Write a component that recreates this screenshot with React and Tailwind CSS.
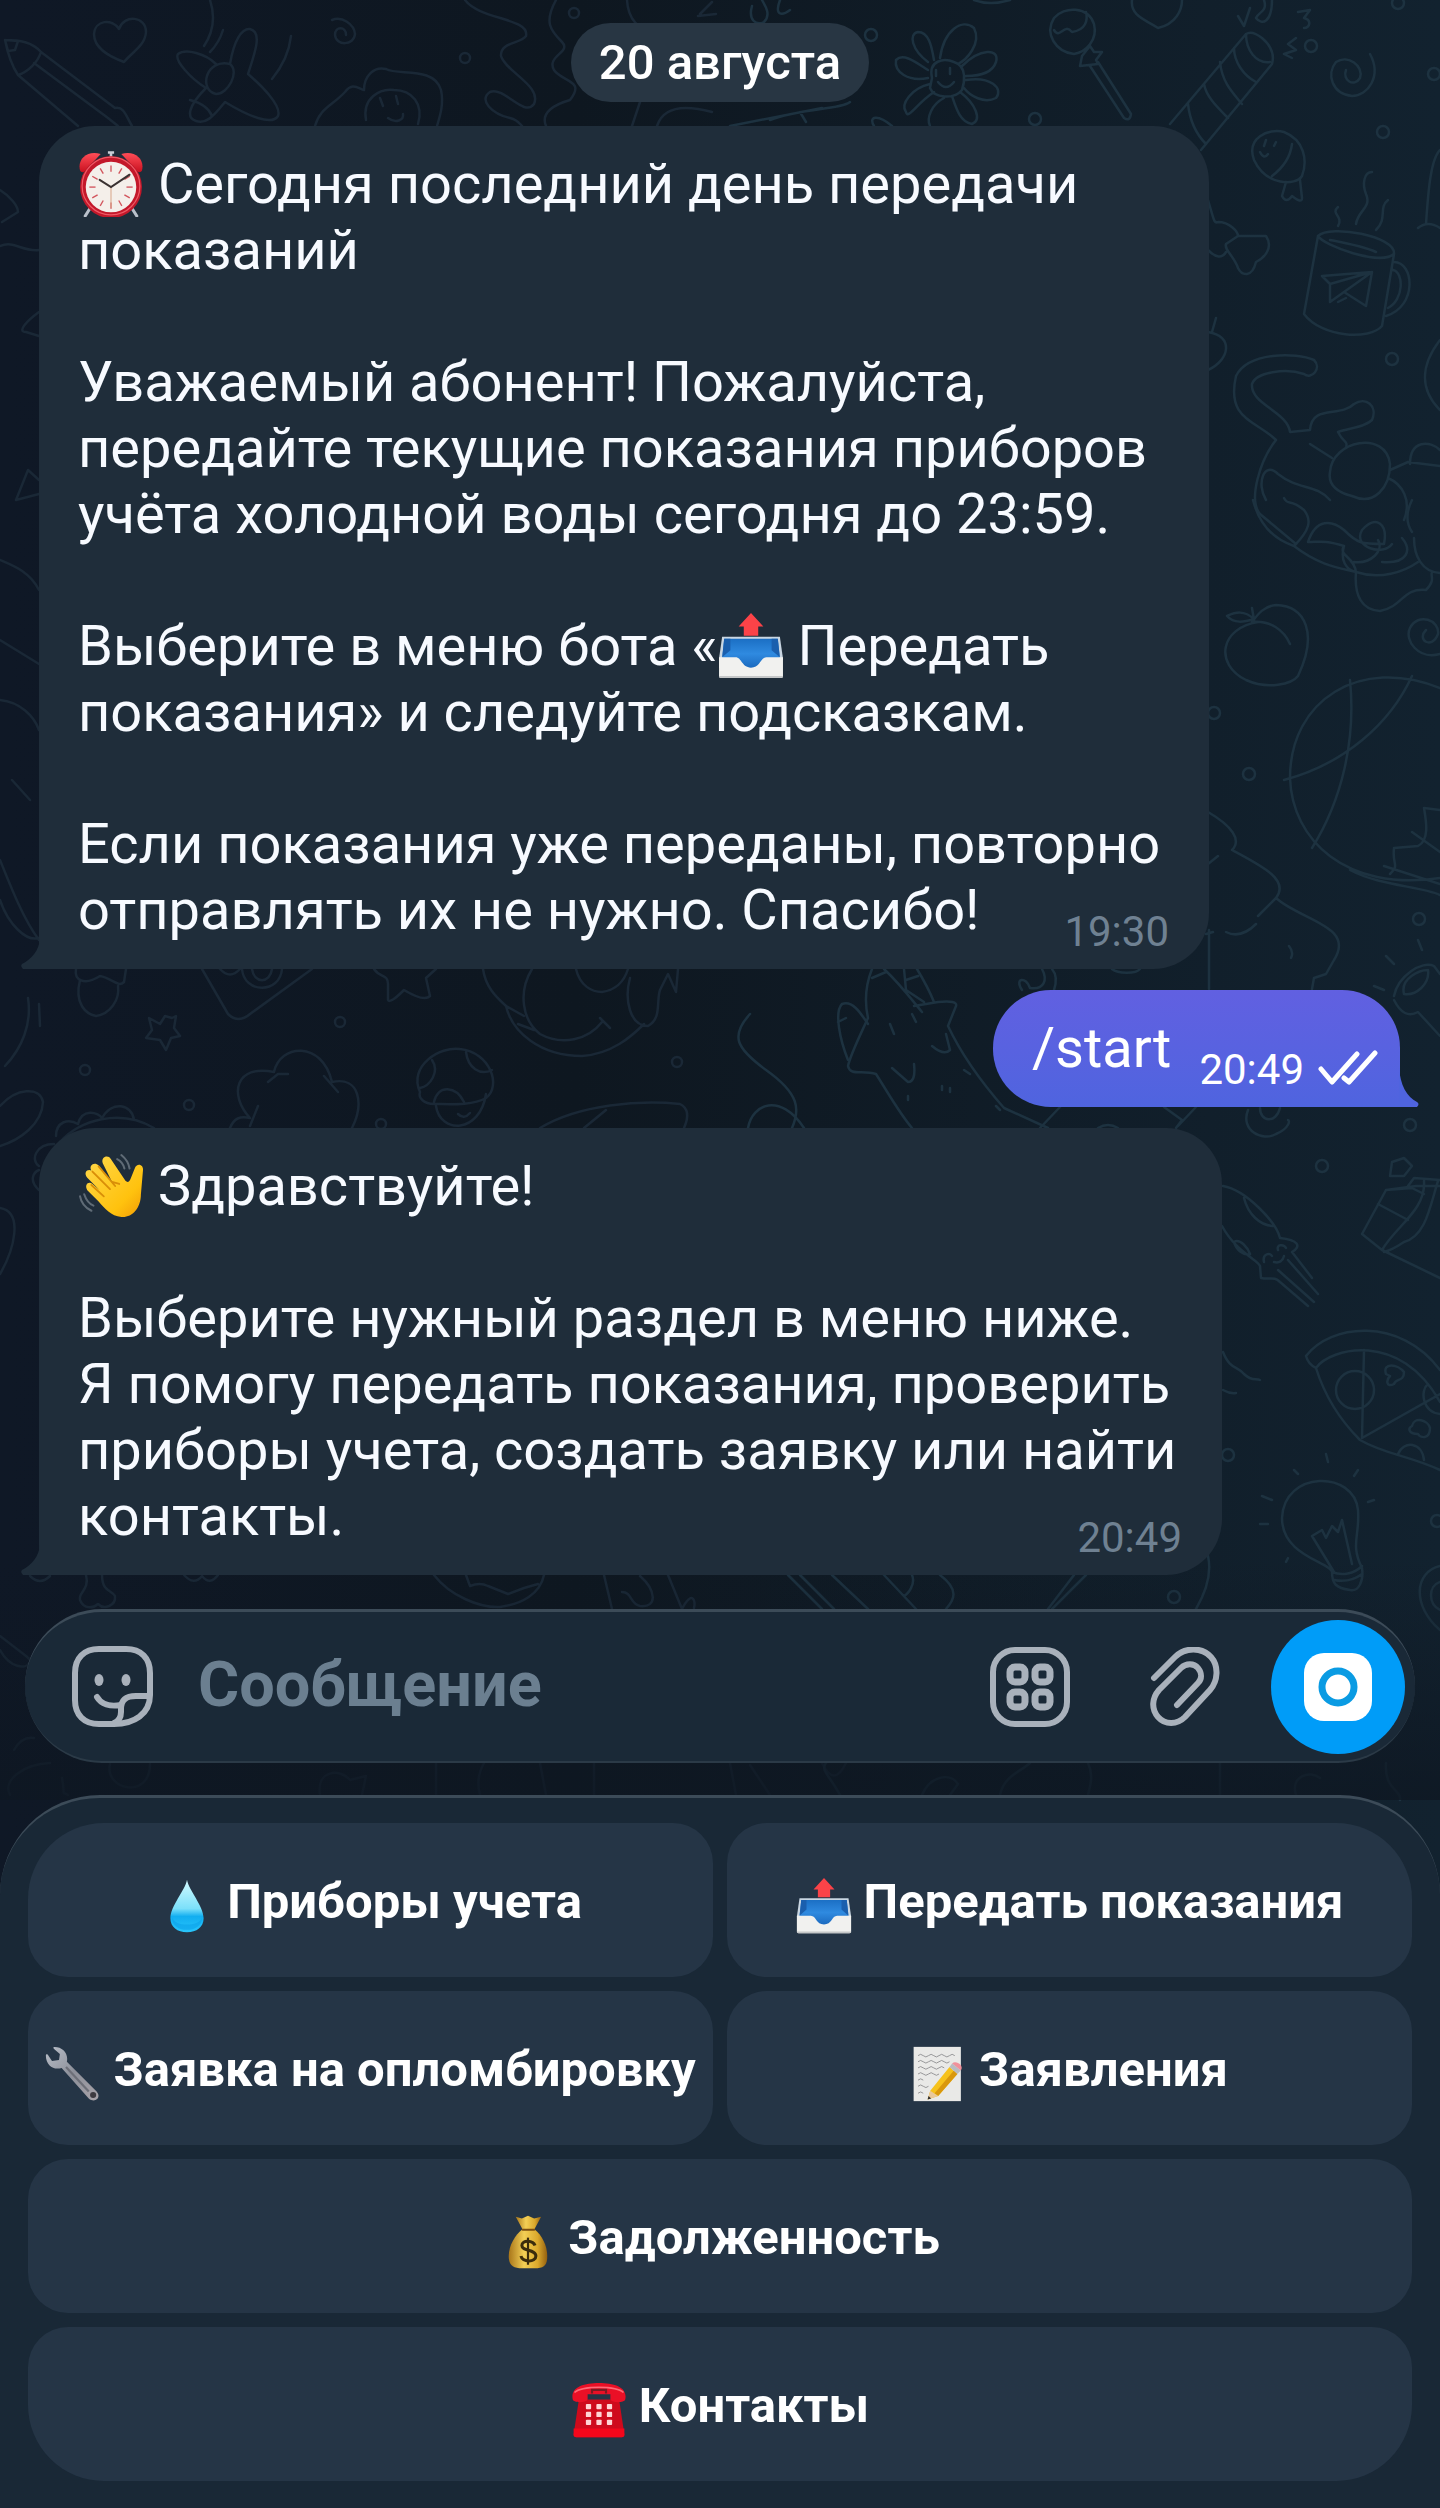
import { useState } from "react";
import clsx from "clsx";

const FONT = "font-['Roboto','Noto_Sans',sans-serif]";

/* ---------- emoji ---------- */

// gradients shared by all emoji
function EmojiDefs() {
  return (
    <svg width="0" height="0" className="absolute" aria-hidden="true">
      <defs>
        <linearGradient id="red" x1="0" y1="0" x2="0" y2="1">
          <stop offset="0" stopColor="#ff4d57" />
          <stop offset="1" stopColor="#c8101f" />
        </linearGradient>
        <linearGradient id="hand" x1="0" y1="0" x2="1" y2="1">
          <stop offset="0" stopColor="#ffd84a" />
          <stop offset="0.7" stopColor="#ffc20e" />
          <stop offset="1" stopColor="#f29a05" />
        </linearGradient>
        <linearGradient id="tray" x1="0" y1="0" x2="0" y2="1">
          <stop offset="0" stopColor="#1b6fc4" />
          <stop offset="0.5" stopColor="#2f8ae0" />
          <stop offset="1" stopColor="#1a68bd" />
        </linearGradient>
        <linearGradient id="drop" x1="0" y1="0" x2="0" y2="1">
          <stop offset="0" stopColor="#d4fbff" />
          <stop offset="0.55" stopColor="#7be0fa" />
          <stop offset="0.7" stopColor="#12aef0" />
          <stop offset="1" stopColor="#29c5fb" />
        </linearGradient>
        <linearGradient id="steel" x1="0" y1="0" x2="1" y2="1">
          <stop offset="0" stopColor="#b9bfc9" />
          <stop offset="0.5" stopColor="#8c8f99" />
          <stop offset="1" stopColor="#a9a4aa" />
        </linearGradient>
        <linearGradient id="gold" x1="0" y1="0" x2="1" y2="0">
          <stop offset="0" stopColor="#a9761a" />
          <stop offset="0.4" stopColor="#f3cf55" />
          <stop offset="0.75" stopColor="#dba92c" />
          <stop offset="1" stopColor="#946010" />
        </linearGradient>
      </defs>
    </svg>
  );
}

function AlarmClock() {
  const ticks = [0, 30, 60, 90, 120, 150, 180, 210, 240, 270, 300, 330];
  return (
    <>
      <path d="M12 55 L7 63 M52 55 L57 63" stroke="#b9c0ca" strokeWidth="3" strokeLinecap="round" />
      <path d="M32 2 V8 M29 1.500 H35" stroke="#c9ced6" strokeWidth="2.500" />
      <path d="M2 19 C-1 8 9 -1 22 3 L6 20 C5 21 3 21 2 19 Z" fill="url(#red)" />
      <path d="M62 19 C65 8 55 -1 42 3 L58 20 C59 21 61 21 62 19 Z" fill="url(#red)" />
      <circle cx="32" cy="35" r="30" fill="#c3182a" />
      <circle cx="32" cy="34" r="28" fill="none" stroke="#ef5a66" strokeWidth="1.200" />
      <circle cx="32" cy="35" r="24.500" fill="#f4efea" />
      {ticks.map((deg) => (
        <path key={deg} d="M32 14 V20" stroke="#d2545c" strokeWidth="1.300" transform={`rotate(${deg} 32 35)`} />
      ))}
      <path d="M32 35 V55" stroke="#d9a88a" strokeWidth="1" />
      <path d="M21 28 L32 35 L50 23" fill="none" stroke="#3a3232" strokeWidth="2" strokeLinecap="round" />
    </>
  );
}

function WavingHand() {
  return (
    <>
      <path
        d="M13 17 C10 12 16 8 20 12 L33 28 L24 10 C22 4 29 1 32 6 L46 27 C48 29 50 28 51 25 L55 15 C57 9 64 11 63 17 L61 40 C61 54 52 63 42 62 C32 61 26 54 20 47 L9 36 C6 31 10 27 14 30 L21 36 L9 24 C5 19 9 15 13 17 Z"
        fill="url(#hand)"
      />
      <path d="M14 18 L31 35 M20 13 L36 32 M33 28 L40 30 M13 31 L25 42" stroke="#d98e08" strokeWidth="1.800" strokeLinecap="round" fill="none" />
      <path d="M42 2 C47 6 49 9 50 15 M38 6 C42 8 44 11 45 15 M2 42 C3 48 7 53 13 56 M6 40 C8 46 10 49 15 51" stroke="#5f6b76" strokeWidth="2" fill="none" strokeLinecap="round" />
    </>
  );
}

function OutboxTray() {
  return (
    <>
      <path d="M4 23 H60 L63 44 H1 Z" fill="#c9d6e2" />
      <path d="M6 25 H58 L61 54 H3 Z" fill="url(#tray)" />
      <path d="M6 25 L4 43 L12 36 V25 Z M58 25 L60 43 L52 36 V25 Z" fill="#1a5fae" />
      <path d="M1 43 H17 C23 43 23 53 32 53 C41 53 41 43 47 43 H63 V61 Q63 63 61 63 H3 Q1 63 1 61 Z" fill="#f1f1ef" />
      <path d="M1 61 H63 V62 Q63 63 61 63 H3 Q1 63 1 62 Z" fill="#c5c7c8" />
      <path d="M32 0 L44 13 H39 V22 H25 V13 H20 Z" fill="#fb4348" />
    </>
  );
}

function Droplet() {
  return (
    <>
      <path d="M32 2 C34 14 51 32 51 46 C51 56 43 62 32 62 C21 62 13 56 13 46 C13 32 30 14 32 2 Z" fill="url(#drop)" />
      <path d="M15 45 C18 56 46 56 49 45 C50 64 14 64 15 45 Z" fill="#0ba2ea" opacity="0.6" />
    </>
  );
}

function Wrench() {
  return (
    <>
      <path
        d="M11 1 C20 1 27 8 25 18 L59 52 C65 59 57 66 50 60 L19 25 C10 28 1 22 1 11 C1 9 3 9 4 11 L8 17 L16 16 L17 9 L11 4 C9 3 9 1 11 1 Z"
        fill="url(#steel)"
      />
      <path d="M24 24 L50 52" stroke="#6d6f78" strokeWidth="2.500" />
      <circle cx="55" cy="56" r="3.500" fill="#3d3a40" />
    </>
  );
}

function Memo() {
  return (
    <>
      <rect x="3" y="1" width="54" height="62" fill="#e9e9e7" />
      <path
        d="M8 11 q3 -3 6 0 t6 0 t6 0 t6 0 t6 0 t6 0 t6 0 M8 18 q3 -3 6 0 t6 0 t6 0 t6 0 t6 0 t6 0 M8 25 q3 -3 6 0 t6 0 t6 0 t6 0 t6 0 M8 32 q3 -3 6 0 t6 0 t6 0 t6 0 M8 39 q3 -3 6 0 M8 46 q3 -3 6 0 t6 0 M8 54 q3 -3 6 0"
        fill="none"
        stroke="#8a8a8d"
        strokeWidth="1"
      />
      <path d="M22 51 L44 24 L53 32 L31 57 L19 61 Z" fill="#f6c21c" />
      <path d="M27 54 L49 28 L53 32 L31 57 Z" fill="#d9980d" />
      <path d="M22 51 L31 57 L19 61 Z" fill="#e9c89a" />
      <path d="M20 57 L23 60 L19 61 Z" fill="#2c2c2c" />
      <path d="M44 24 L47 20 L57 28 L53 32 Z" fill="#b9bcc2" />
      <path d="M47 20 C51 16 61 22 57 28 Z" fill="#f0919b" />
    </>
  );
}

function MoneyBag() {
  return (
    <>
      <path d="M18 3 L25 5 L32 2 L39 5 L47 3 L39 18 H26 Z" fill="url(#gold)" />
      <path d="M26 17 H39 C48 24 54 36 54 48 C54 58 51 61 43 62 H22 C14 61 10 58 10 48 C10 36 17 24 26 17 Z" fill="url(#gold)" />
      <path d="M26 18 H39" stroke="#7b4d10" strokeWidth="2.500" strokeLinecap="round" />
      <path d="M32 27 V58" stroke="#3b2c0c" strokeWidth="2.500" />
      <path d="M40 36 C38 30 25 29 25 36 C25 43 41 40 41 48 C41 56 25 55 24 48" fill="none" stroke="#3b2c0c" strokeWidth="3.500" />
    </>
  );
}

function Telephone() {
  return (
    <>
      <path d="M9 20 H55 L61 60 Q61 63 58 63 H6 Q3 63 3 60 Z" fill="#cf0a1c" />
      <path d="M3 53 H61 V60 Q61 63 58 63 H6 Q3 63 3 60 Z" fill="#f4071b" />
      <path d="M2 20 C-1 6 14 1 32 1 C50 1 65 6 62 20 C61 24 47 24 45 20 V14 H19 V20 C17 24 3 24 2 20 Z" fill="#ea1026" />
      <path d="M4 12 C12 4 52 4 60 12" fill="none" stroke="#ff6a76" strokeWidth="2" />
      <path d="M24 13 V9 H40 V13" fill="none" stroke="#7c1a22" strokeWidth="2.500" />
      {[25, 34, 43].map((y) =>
        [17, 29, 41].map((x) => <rect key={`${x}-${y}`} x={x} y={y} width="6" height="6" rx="1" fill="#ffd5d5" />)
      )}
    </>
  );
}

const EMOJI = {
  "⏰": AlarmClock,
  "👋": WavingHand,
  "📤": OutboxTray,
  "💧": Droplet,
  "🔧": Wrench,
  "📝": Memo,
  "💰": MoneyBag,
  "☎️": Telephone,
};

function Emoji({ symbol, className }) {
  const Shape = EMOJI[symbol];
  return (
    <svg viewBox="0 0 64 64" className={clsx("inline-block shrink-0", className)} role="img" aria-label={symbol}>
      <Shape />
    </svg>
  );
}

/* ---------- wallpaper ---------- */

// doodles on the left and in the middle, drawn fainter than those on the right
const DOODLES_DIM = [
  // pencil
  "M5 40 C20 40 32 42 41 52 L115 108 M5 40 C8 55 12 66 18 75 L78 126 M34 63 L108 118 M18 75 C28 72 38 62 41 52 M115 108 C124 106 126 116 132 126 M108 118 L118 126 M5 40 L8 51 L15 50 L18 41 Z",
  // heart
  "M124 62 C108 56 94 48 94 34 C95 20 112 18 119 29 C124 14 146 16 146 32 C145 46 132 52 124 62 Z",
  "M210 0 C216 18 212 34 204 46 M223 30 C220 40 216 46 210 52 M291 36 C289 54 281 68 272 79",
  // bird
  "M230 64 C234 40 242 28 250 29 C262 32 256 50 248 74 C262 86 282 106 278 116 C272 126 248 116 225 102 C212 118 206 124 196 121 C186 118 188 106 206 88 C190 78 174 60 178 54 C186 48 206 54 216 64 M230 64 C240 72 228 94 216 94 C198 90 206 58 230 64 M190 100 C198 102 208 106 212 116",
  // curl
  "M332 20 C342 16 354 24 355 34 C354 46 336 46 335 35 C335 26 346 26 346 35",
  // face in a hood
  "M315 126 C320 108 332 106 345 92 C352 82 358 88 364 90 C364 76 374 66 386 69 C398 76 434 66 441 90 C444 104 440 116 437 126 M366 120 C362 98 380 88 394 90 C412 90 424 104 418 124 M380 98 L383 106 M396 96 L398 104 M388 118 C396 124 404 120 403 114",
  // splash
  "M465 0 C480 20 530 18 526 36 C520 44 500 42 501 56 C506 72 542 86 534 104 C524 118 504 86 490 92 C478 100 492 114 510 118 C518 120 520 124 522 126 M556 0 C544 22 550 30 562 42 C572 52 546 56 554 70 C562 82 586 80 570 100 C556 104 540 112 546 126",
  "M627 0 C628 20 640 30 650 30 M632 126 L640 102 M657 126 C664 104 690 106 712 112 M700 14 L712 2 M698 16 L716 14",
  // left edge
  "M0 190 C10 196 18 206 18 212 L2 222 M0 246 C14 240 22 252 39 250 M39 312 C28 320 16 332 26 332 L39 336 M16 500 L28 470 L39 480 M16 500 L39 494",
  "M0 560 C14 566 30 572 39 590 M0 640 L39 664 M0 700 C20 702 34 716 39 730 M12 780 L30 800 M0 860 C12 890 24 920 39 940 M0 900 C8 924 26 942 39 938",
  // acorn, envelope, star under the first message
  "M76 969 C74 980 84 986 100 976 C112 978 118 988 124 982 L126 969 M80 980 C74 1004 86 1014 96 1016 C110 1014 120 1000 118 986",
  "M202 969 L228 1014 Q238 1024 250 1014 L312 969 M220 969 Q230 980 240 969 M242 969 C244 994 280 994 282 969 M252 969 C254 984 270 984 272 969",
  "M374 969 C380 978 388 974 388 984 L388 1000 Q390 1004 404 990 Q424 1002 430 996 L426 978 L436 969",
  // small star
  "M165 1016 L172 1018 L176 1016 L174 1028 L180 1036 L171 1038 L166 1050 L160 1040 L146 1038 L152 1030 L149 1018 L160 1024 Z",
  "M28 998 C32 1024 22 1048 5 1066 M39 1004 L40 1026",
  // squirrel
  "M483 969 C486 990 500 1000 506 1006 C512 1032 540 1056 582 1056 C612 1054 632 1036 644 1024 M532 969 C518 992 522 1020 540 1034 C562 1046 588 1040 602 1022 M576 969 C580 986 592 992 602 992 C616 990 624 982 628 969 M630 978 C624 1000 630 1026 648 1026 C662 1018 656 1002 660 990 L668 974 L676 992 L678 969 M506 1006 L524 1016 M518 1024 L534 1030 M600 1018 L610 1028",
  // cloud
  "M230 1128 C234 1118 240 1116 250 1118 C228 1094 236 1064 274 1072 C280 1044 322 1040 332 1082 C360 1076 364 1104 352 1128 M268 1082 L278 1074 L288 1074 M324 1076 L338 1092 M250 1126 L258 1106",
  // mushroom
  "M420 1092 C408 1066 440 1046 460 1049 C490 1052 502 1086 486 1098 C472 1106 448 1104 434 1104 C424 1104 418 1098 420 1092 M432 1060 C440 1072 430 1086 420 1088 M466 1052 C468 1068 480 1076 492 1070 M434 1102 C438 1084 456 1086 464 1102 M436 1106 C440 1134 480 1134 486 1094 M458 1114 Q464 1120 470 1113",
  // leaf
  "M540 1128 C580 1104 640 1100 680 1104 Q692 1110 684 1128 M584 1128 L606 1110",
  // flower and oval on the left
  "M0 1106 C16 1088 40 1086 43 1102 C42 1124 20 1140 0 1146 M56 1136 C56 1122 68 1118 78 1124 C82 1108 98 1112 102 1118 C112 1100 132 1104 134 1120 M60 1142 C80 1120 120 1108 154 1128 M39 1166 C30 1160 36 1144 54 1144 M39 1190 C28 1180 34 1172 39 1170 M0 1208 C24 1212 14 1250 0 1274",
  // bones under the second message
  "M86 1575 C90 1590 78 1592 80 1600 C84 1610 94 1608 98 1604 C104 1610 116 1606 115 1596 C112 1590 102 1592 102 1575 M30 1576 Q40 1586 50 1576 M184 1575 Q194 1586 202 1576 Q210 1586 218 1575",
  "M434 1575 C450 1596 480 1608 500 1607 C522 1604 540 1594 544 1575 M466 1575 L470 1586 Q480 1582 488 1586 L508 1594 L524 1588 L538 1584 M604 1575 L612 1609 M640 1576 C656 1590 658 1608 640 1606 C630 1604 632 1592 622 1592 M668 1575 L682 1609 C692 1590 696 1600 694 1608",
  "M0 1636 L26 1656 L39 1668 M0 1650 C10 1668 26 1670 30 1662",
  // things below the message field
  "M14 1750 Q22 1736 34 1738 M10 1795 C2 1780 24 1764 50 1763 M62 1778 C66 1800 60 1790 68 1795 M110 1764 C104 1790 150 1800 150 1764 M320 1795 C316 1770 340 1768 350 1780 L366 1776 L362 1795 M436 1763 V1795 M480 1795 C476 1780 480 1770 484 1763 M540 1763 L546 1795 M594 1763 V1795 M730 1763 L736 1795 M750 1765 L770 1795 M822 1763 Q834 1788 846 1763",
];

const DOODLES_BRIGHT = [
  "M752 6 C748 20 756 26 764 22 C772 14 764 4 762 0 M780 0 C774 16 782 16 790 10 M974 0 Q990 6 1010 0",
  // flower
  "M932 78 C928 60 944 58 954 62 C968 66 964 84 962 90 C954 100 934 98 930 88 Z M928 62 C912 50 908 34 918 32 C930 32 932 50 934 60 M940 58 C944 30 962 18 974 28 C982 44 966 60 958 64 M962 66 C980 48 1000 48 996 62 C992 74 976 76 966 76 M966 80 C990 76 1004 88 996 98 C984 104 970 96 964 88 M960 92 C976 104 982 120 972 124 C960 122 956 108 952 96 M944 98 C932 104 926 118 930 126 M934 92 C916 104 908 120 906 112 C900 104 912 88 930 84 M928 78 C908 82 894 72 896 60 C904 52 918 64 928 70 M936 70 V76 M950 68 V74 M938 82 Q946 92 954 82",
  // cake slice behind the pill
  "M730 126 L822 108 M770 120 C800 108 840 110 850 102 M800 112 L806 122 M874 126 C868 116 878 114 892 126",
  // lollipop
  "M1074 54 C1056 52 1044 34 1054 18 C1064 6 1088 6 1094 24 C1098 40 1086 52 1074 54 Z M1054 30 C1060 40 1064 22 1072 32 C1086 30 1088 20 1086 12 M1082 56 L1090 46 L1094 52 L1102 52 L1096 60 L1098 64 L1080 66 Z M1090 66 L1124 118 Q1130 122 1131 114 L1098 62",
  "M1132 0 C1130 16 1146 20 1158 28 C1176 24 1182 10 1182 0",
  // popper
  "M1170 124 L1246 34 Q1252 30 1262 38 Q1276 50 1272 64 L1201 150 M1246 34 C1246 50 1256 64 1270 62 M1234 48 C1234 62 1244 76 1256 82 M1220 62 C1222 82 1232 92 1242 104 M1204 84 C1206 96 1216 106 1228 118 M1188 104 C1190 122 1196 134 1206 144",
  "M1238 16 L1244 26 L1250 8 M1264 0 C1268 12 1258 12 1256 18 C1262 26 1272 22 1272 0 M1298 12 L1310 10 L1304 18 C1312 20 1310 28 1304 28 M1296 38 L1288 44 L1296 50 L1284 54 L1292 58",
  // spirals
  "M1370 54 C1382 76 1368 96 1352 96 C1332 94 1326 74 1336 62 C1348 54 1364 66 1360 78 C1354 88 1342 80 1346 70",
  // balloon bird
  "M1254 160 C1246 138 1268 128 1284 132 C1304 140 1308 160 1302 176 C1296 186 1266 186 1254 160 Z M1292 144 C1290 160 1280 170 1272 176 M1266 140 L1264 146 M1276 142 L1274 146 M1260 152 Q1264 160 1268 154 M1286 182 L1282 196 Q1286 204 1292 196 Q1302 204 1302 198 L1300 180",
  // mug
  "M1318 236 C1330 224 1396 236 1394 254 C1380 266 1324 246 1318 236 L1304 314 C1322 338 1370 340 1382 326 L1394 254 M1330 240 C1340 242 1362 246 1376 252 M1394 262 C1414 262 1418 306 1386 316 M1393 270 C1404 272 1404 300 1388 308 M1322 276 L1372 272 L1366 306 L1344 292 L1330 302 V284 Z M1330 284 L1372 272 L1344 292 M1338 302 L1346 298",
  "M1338 226 C1344 216 1330 214 1338 207 M1356 224 C1358 210 1372 208 1366 194 C1362 184 1364 172 1372 172 M1376 230 C1388 218 1378 208 1388 200",
  "M1208 200 C1214 220 1214 224 1218 222 C1230 222 1238 232 1238 236 L1266 236 C1274 248 1264 258 1256 262 C1252 278 1242 276 1238 268 C1234 256 1224 250 1226 244 L1238 236 M1208 250 Q1220 262 1226 252 M1216 318 L1212 332 M1208 332 C1234 336 1230 360 1208 370",
  // cat with a ball
  "M1276 440 C1256 420 1226 420 1236 376 C1248 352 1296 352 1314 360 C1322 368 1312 380 1304 374 C1286 368 1256 372 1252 384 C1250 404 1288 412 1290 432 L1310 430 C1312 404 1340 418 1354 404 C1366 396 1378 406 1372 420 C1364 428 1348 428 1338 432 C1344 444 1348 440 1346 448 M1276 440 C1260 460 1248 500 1260 514 L1296 544",
  "M1330 472 C1332 440 1386 430 1390 464 C1390 488 1374 506 1352 496 C1336 492 1328 484 1330 472 M1310 444 L1332 458 M1390 470 L1408 462 L1440 466 M1410 464 C1410 440 1430 440 1440 450 M1388 478 C1402 484 1412 500 1404 520 M1266 500 C1256 484 1264 460 1278 474 C1298 490 1316 484 1330 500",
  "M1253 500 C1258 520 1270 538 1294 546 C1310 530 1312 520 1304 510 C1290 498 1288 506 1284 498 M1294 546 C1320 566 1340 568 1356 572 C1354 556 1338 556 1344 546 C1324 540 1320 542 1308 542 C1316 518 1332 520 1344 530 C1358 544 1362 544 1384 544 C1388 524 1376 514 1362 530 C1352 548 1384 556 1392 544 M1344 546 C1340 560 1346 570 1356 572 C1380 580 1404 572 1418 562 M1354 562 C1372 564 1384 550 1378 540 M1382 562 C1408 564 1412 550 1402 538",
  "M1356 572 C1354 596 1362 610 1380 611 C1404 606 1402 588 1426 590 C1436 580 1430 576 1432 572 M1414 538 C1414 556 1422 572 1440 573 M1412 500 C1404 516 1408 526 1412 532",
  "M1440 150 C1430 160 1428 196 1426 224 M1418 228 Q1428 220 1440 228 M1440 340 C1420 366 1420 390 1440 410",
  // peach
  "M1258 622 C1220 628 1214 664 1246 680 C1268 690 1292 684 1298 676 C1318 634 1306 606 1276 605 C1264 606 1258 614 1252 622 C1270 620 1284 630 1290 644 M1254 619 C1244 610 1236 612 1227 616 C1234 624 1244 622 1254 619 M1252 608 L1254 620",
  // ball
  "M1440 688 C1360 656 1290 700 1290 778 C1292 840 1346 892 1440 878 M1350 680 C1356 740 1342 800 1312 848 M1412 676 C1390 724 1344 764 1284 780 M1350 870 C1380 886 1420 886 1440 895 M1440 810 L1424 808 C1426 820 1430 840 1418 846 L1394 848 C1392 866 1400 864 1390 874 M1412 832 L1440 852 M1384 866 L1440 884",
  "M1440 654 C1418 660 1404 640 1410 628 C1418 612 1440 620 1438 634 C1432 650 1416 640 1426 630",
  // ice cream and tree
  "M1208 812 C1232 826 1242 840 1232 850 C1262 866 1290 880 1276 898 C1300 920 1356 926 1334 960 L1326 974 L1314 978 L1312 989 M1208 864 L1218 856 M1276 898 L1258 916 M1256 924 C1244 936 1234 936 1226 932 M1206 934 L1213 932 M1209 930 V989 M1289 946 Q1294 952 1291 958",
  // shell, carrots, dino above the reply bubble
  "M1112 969 C1118 974 1136 974 1140 969 M1022 990 C1014 978 1026 976 1030 988 C1044 990 1048 980 1042 969 M1052 969 C1058 976 1056 984 1054 990",
  "M1394 996 C1398 976 1422 960 1434 966 L1440 974 M1394 1000 Q1404 1020 1418 1012 L1440 1036 M1404 994 C1400 978 1420 970 1428 970 C1430 984 1416 996 1404 994 M1386 956 L1394 964 M1374 986 L1384 990 M1418 940 L1422 950",
  // pine tree and fox
  "M872 969 C866 984 864 1000 868 1018 C856 1044 850 1056 848 1066 C850 1076 862 1070 876 1074 C890 1096 900 1114 912 1128 M884 969 C900 984 912 1000 922 1012 M904 969 L906 990 L924 1002 M917 969 C926 984 930 992 934 1002 M914 1006 L938 1002 Q958 1000 956 1006 L948 1026 C964 1060 990 1092 1004 1108 L1048 1128 M872 978 L886 972 M906 980 L918 976",
  "M868 1024 C860 1012 852 1000 842 1004 C834 1012 840 1040 848 1060 M838 1022 L846 1018 M890 1024 L894 1034 M912 1014 L916 1022 M932 1046 Q944 1056 950 1050 L946 1034 M892 1068 L908 1082 Q916 1082 914 1064 M964 1070 L970 1074 M942 1086 V1090 M950 1088 V1092 M908 1096 V1100 M996 1106 L1000 1110 M1060 1107 L1040 1128 M1164 1107 L1182 1120 L1176 1128 M1196 1107 L1178 1126",
  "M750 1014 C730 1036 736 1048 766 1070 C800 1094 800 1110 792 1128 M748 1128 C752 1104 780 1092 804 1128 M1248 1110 C1240 1130 1262 1142 1276 1134 C1290 1128 1290 1120 1288 1120 M1260 1108 C1260 1122 1276 1124 1280 1108 M1098 1128 Q1108 1122 1118 1128",
  // squid
  "M1223 1186 C1246 1190 1276 1222 1280 1238 C1298 1240 1302 1246 1292 1252 L1312 1278 M1222 1226 C1236 1252 1258 1260 1260 1266 L1261 1278 C1270 1280 1274 1276 1280 1282 L1308 1306 M1244 1198 C1248 1214 1260 1226 1274 1226 M1234 1242 C1240 1238 1248 1248 1250 1254 C1244 1256 1236 1250 1234 1242 M1278 1270 L1314 1302 M1288 1260 L1318 1294 M1264 1262 C1262 1254 1270 1252 1272 1256 M1278 1250 C1276 1244 1284 1244 1286 1248 M1274 1262 Q1282 1264 1284 1256",
  // milk box
  "M1440 1186 L1416 1186 L1386 1190 L1362 1234 L1382 1250 L1440 1278 M1386 1190 L1412 1188 L1424 1194 M1378 1204 L1408 1220 M1424 1181 C1426 1210 1396 1226 1382 1250 M1438 1181 C1430 1206 1426 1236 1404 1242 Q1392 1250 1384 1252 M1408 1186 L1414 1178 L1440 1180",
  "M1392 1162 L1404 1158 L1412 1166 L1404 1176 L1390 1176 Z",
  // pizza
  "M1306 1356 C1330 1324 1400 1316 1440 1370 M1306 1356 Q1308 1364 1316 1368 C1330 1348 1400 1330 1440 1402 M1316 1368 C1326 1400 1344 1424 1360 1440 C1384 1454 1410 1456 1440 1470 M1364 1350 L1362 1438 L1440 1394 M1336 1390 A19 19 0 1 1 1374 1390 A19 19 0 1 1 1336 1390 M1428 1384 C1420 1390 1422 1412 1440 1414 M1398 1454 C1404 1440 1422 1442 1424 1460 M1386 1374 C1382 1362 1398 1364 1404 1372 C1404 1382 1396 1378 1394 1384 C1386 1388 1386 1380 1390 1376 Z M1412 1426 C1414 1416 1428 1420 1430 1428 C1430 1440 1420 1438 1418 1434 C1408 1434 1408 1428 1412 1426 Z",
  "M1223 1352 C1230 1370 1238 1366 1244 1374 C1252 1382 1256 1378 1260 1380 M1223 1390 Q1230 1394 1236 1393",
  // light bulb
  "M1332 1572 C1330 1562 1282 1556 1282 1518 C1284 1470 1354 1470 1358 1510 C1360 1536 1350 1544 1362 1568 C1364 1582 1358 1592 1350 1590 C1336 1588 1332 1584 1332 1572 C1342 1576 1354 1574 1362 1566 M1334 1580 C1344 1582 1354 1580 1362 1574 M1334 1572 L1312 1536 L1322 1530 L1326 1538 L1332 1526 L1338 1532 L1342 1520 L1352 1564 M1326 1454 L1328 1462 M1294 1470 L1298 1474 M1358 1470 L1354 1476 M1262 1496 L1272 1500 M1260 1524 L1268 1524 M1368 1502 L1374 1500 M1286 1562 L1288 1558",
  "M1440 1566 C1414 1572 1412 1606 1440 1630 M1440 1582 C1428 1586 1428 1604 1440 1610 M1208 1556 C1212 1574 1206 1592 1196 1609 M1086 1575 L1052 1609 M1074 1575 L1048 1609 M788 1575 L822 1609 M800 1575 L834 1609 M832 1575 L868 1609 M884 1575 L916 1609 M912 1575 C916 1584 908 1594 904 1596 M940 1575 C960 1590 954 1600 946 1609",
  "M840 1795 C830 1776 820 1770 826 1763 M922 1795 C930 1776 950 1772 958 1784 L950 1795 M1000 1795 C1004 1776 1020 1772 1030 1763 M1088 1763 C1094 1776 1090 1786 1088 1795 M1220 1763 V1795 M1386 1763 C1384 1790 1402 1790 1400 1800 M1296 1795 C1290 1776 1310 1770 1320 1778",
];

const BUBBLES_DIM = [
  [465, 58], [574, 13], [340, 1022], [85, 1070], [189, 1105], [381, 1124], [677, 1062],
];
const BUBBLES_BRIGHT = [
  [871, 35], [1035, 119], [1311, 46], [1383, 132], [1398, 3], [1434, 74], [1392, 359],
  [1214, 713], [1249, 774], [1419, 919], [1322, 1166], [1410, 1125], [1228, 1455], [1174, 1597], [1437, 1521],
];

function Wallpaper() {
  return (
    <svg
      viewBox="0 0 1440 2508"
      preserveAspectRatio="xMidYMin slice"
      className="absolute inset-0 h-full w-full"
      fill="none"
      strokeWidth="2.500"
      strokeLinecap="round"
      strokeLinejoin="round"
      aria-hidden="true"
    >
      <defs>
        <linearGradient id="fade" x1="0" y1="0" x2="0" y2="1">
          <stop offset="0" stopColor="#0e1722" stopOpacity="0" />
          <stop offset="1" stopColor="#0e1722" stopOpacity="0.8" />
        </linearGradient>
      </defs>
      <g stroke="#1a2836">
        {DOODLES_DIM.map((d) => <path key={d} d={d} />)}
        {BUBBLES_DIM.map(([x, y]) => <circle key={`${x}-${y}`} cx={x} cy={y} r="5" />)}
      </g>
      <g stroke="#1d3240">
        {DOODLES_BRIGHT.map((d) => <path key={d} d={d} />)}
        {BUBBLES_BRIGHT.map(([x, y]) => <circle key={`${x}-${y}`} cx={x} cy={y} r="6" />)}
      </g>
      <rect x="0" y="1560" width="1440" height="240" fill="url(#fade)" />
    </svg>
  );
}

/* ---------- messages ---------- */

function IncomingMessage({ time, className, children }) {
  return (
    <article
      className={clsx(
        "relative ml-[39px] rounded-[56px] rounded-bl-none bg-[#1f2d3a] px-[39px] pt-[25px] pb-[26px] text-[56px] leading-[66px] text-[#f7faff]",
        className
      )}
    >
      <svg viewBox="0 0 20 30" className="absolute bottom-0 -left-[19px] h-[30px] w-5" fill="#1f2d3a" aria-hidden="true">
        <path d="M20 0 C19 11 12 20 2 25 Q0 27 3 30 H20 Z" />
      </svg>
      {children}
      <time className="absolute right-10 bottom-3 text-[42px] leading-[50px] text-[#6f8192]">{time}</time>
    </article>
  );
}

function OutgoingMessage({ time, children }) {
  return (
    <article className="relative mr-10 flex w-fit items-end self-end rounded-[58px] rounded-br-none bg-linear-to-b from-[#6160e1] to-[#4f64df] pr-[22px] pl-[39px] text-white">
      <p className="pt-[25px] pb-[26px] text-[56px] leading-[66px]">{children}</p>
      <time className="mb-3 ml-7 text-[42px] leading-[50px]">{time}</time>
      <svg viewBox="0 0 60 36" className="mb-[22px] ml-3.5 h-9 w-[60px]" fill="none" stroke="currentColor" strokeWidth="5" strokeLinecap="round" aria-label="Прочитано">
        <path d="M3 20 L14 33 L39 5" strokeLinejoin="round" />
        <path d="M26 29 L31 33 L57 4" strokeLinejoin="round" />
      </svg>
      <svg viewBox="0 0 20 40" className="absolute -right-[19px] bottom-0 h-10 w-5" fill="#4f64df" aria-hidden="true">
        <path d="M0 0 C1 18 8 30 18 35 Q21 37 18 40 H0 Z" />
      </svg>
    </article>
  );
}

/* ---------- composer ---------- */

function StickerIcon() {
  return (
    <svg viewBox="0 0 81 81" className="size-[81px]" fill="none" stroke="#a9b1bb" strokeWidth="6" strokeLinecap="round" strokeLinejoin="round">
      <path d="M78 49 V27 C78 12 69 3 54 3 H27 C12 3 3 12 3 27 V54 C3 69 12 78 27 78 H42 C62 78 78 68 78 49 Z" />
      <path d="M76 50 H64 C54 50 49 54 49 63 V66 C49 71 47 75 42 77" />
      <path d="M25 51 C29 58 38 61 49 59" />
      <ellipse cx="27" cy="34" rx="4.500" ry="6" fill="#a9b1bb" stroke="none" />
      <ellipse cx="54" cy="34" rx="4.500" ry="6" fill="#a9b1bb" stroke="none" />
    </svg>
  );
}

function KeyboardGridIcon() {
  return (
    <svg viewBox="0 0 80 80" className="size-20" fill="none" stroke="#a9b1bb">
      <rect x="3" y="3" width="74" height="74" rx="22" strokeWidth="6" />
      {[20, 45].map((x) =>
        [20, 45].map((y) => <rect key={`${x}-${y}`} x={x} y={y} width="15" height="15" rx="5" strokeWidth="7" />)
      )}
    </svg>
  );
}

function ClipIcon() {
  return (
    <svg viewBox="0 0 70 80" className="h-20 w-[70px]" fill="none" stroke="#a9b1bb" strokeWidth="6" strokeLinecap="round">
      <path d="M4 31 L25 10 C35 0 52 0 61 10 C69 19 68 34 60 43 L35 70 C27 78 15 78 8 70 C1 62 2 51 9 43 L31 21 C36 16 44 16 48 21 C52 26 52 32 48 36 L27 58" />
    </svg>
  );
}

function Composer() {
  const [text, setText] = useState("");

  return (
    <form
      className="mx-[25px] mt-[34px] flex h-[154px] items-center rounded-[77px] border-t-3 border-b-2 border-t-[#3c4b58] border-b-[#2b3a47] bg-[#1a2937] pr-2.5 pl-[47px]"
      onSubmit={(e) => e.preventDefault()}
    >
      <button type="button" aria-label="Стикеры"><StickerIcon /></button>
      <input
        value={text}
        onChange={(e) => setText(e.target.value)}
        placeholder="Сообщение"
        aria-label="Сообщение"
        className="ml-[45px] min-w-0 flex-1 bg-transparent pb-1 text-[63px] leading-[74px] font-bold text-white outline-none placeholder:text-[#6b7f90]"
      />
      <button type="button" aria-label="Клавиатура бота"><KeyboardGridIcon /></button>
      <button type="button" aria-label="Прикрепить файл" className="ml-20"><ClipIcon /></button>
      <button type="button" aria-label="Записать видео" className="ml-[51px] flex size-[134px] items-center justify-center rounded-full bg-[#009cf8]">
        <svg viewBox="0 0 68 68" className="size-[68px]">
          <rect width="68" height="68" rx="20" fill="#fff" />
          <circle cx="34" cy="34" r="16" fill="none" stroke="#0a9be3" strokeWidth="7" />
        </svg>
      </button>
    </form>
  );
}

/* ---------- bot keyboard ---------- */

const KEYS = [
  { emoji: "💧", label: "Приборы учета", className: "rounded-tl-[76px]" },
  { emoji: "📤", label: "Передать показания", className: "rounded-tr-[76px]" },
  { emoji: "🔧", label: "Заявка на опломбировку" },
  { emoji: "📝", label: "Заявления" },
  { emoji: "💰", label: "Задолженность", className: "col-span-2" },
  { emoji: "☎️", label: "Контакты", className: "col-span-2 rounded-b-[76px]" },
];

function BotKeyboard() {
  return (
    <div className="mt-8 grid flex-1 grid-cols-2 gap-3.5 rounded-t-[100px] border-t-3 border-[#3c4b58] bg-[#192836] px-7 pt-[25px] pb-[27px]">
      {KEYS.map((key) => (
        <button
          key={key.label}
          type="button"
          className={clsx(
            "flex h-[154px] items-center justify-center gap-3 rounded-[40px] bg-[#253546] pt-1 text-[49px] leading-[60px] font-bold whitespace-nowrap text-white",
            key.className
          )}
        >
          <Emoji symbol={key.emoji} className="mt-2 size-14" />
          {key.label}
        </button>
      ))}
    </div>
  );
}

export default function App() {
  return (
    <div className={clsx("relative isolate flex min-h-screen flex-col overflow-hidden bg-linear-to-r from-[#0f1826] via-[#0e1720] via-40% to-[#12222f]", FONT)}>
      <EmojiDefs />
      <Wallpaper />

      <main className="relative flex flex-1 flex-col">
        <div className="mt-[23px] mb-6 self-center rounded-full bg-[#283643] px-7 py-2 text-[49px] leading-[63px] font-medium text-white">
          20 августа
        </div>

        <section className="flex flex-col gap-[21px]" aria-label="Переписка">
          <IncomingMessage time="19:30" className="max-w-[1170px]">
            <p>
              <Emoji symbol="⏰" className="size-[66px] align-top" /> Сегодня последний день передачи показаний
            </p>
            <p className="mt-[66px]">
              Уважаемый абонент! Пожалуйста, передайте текущие показания приборов учёта холодной воды сегодня до 23:59.
            </p>
            <p className="mt-[66px]">
              Выберите в меню бота «<Emoji symbol="📤" className="size-[66px] align-top" /> Передать показания» и следуйте подсказкам.
            </p>
            <p className="mt-[66px]">Если показания уже переданы, повторно отправлять их не нужно. Спасибо!</p>
          </IncomingMessage>

          <OutgoingMessage time="20:49">/start</OutgoingMessage>

          <IncomingMessage time="20:49" className="max-w-[1183px]">
            <p>
              <Emoji symbol="👋" className="size-[66px] align-top" /> Здравствуйте!
            </p>
            <p className="mt-[66px]">
              Выберите нужный раздел в меню ниже.
              <br />
              Я помогу передать показания, проверить приборы учета, создать заявку или найти контакты.
            </p>
          </IncomingMessage>
        </section>

        <Composer />
        <BotKeyboard />
      </main>
    </div>
  );
}
